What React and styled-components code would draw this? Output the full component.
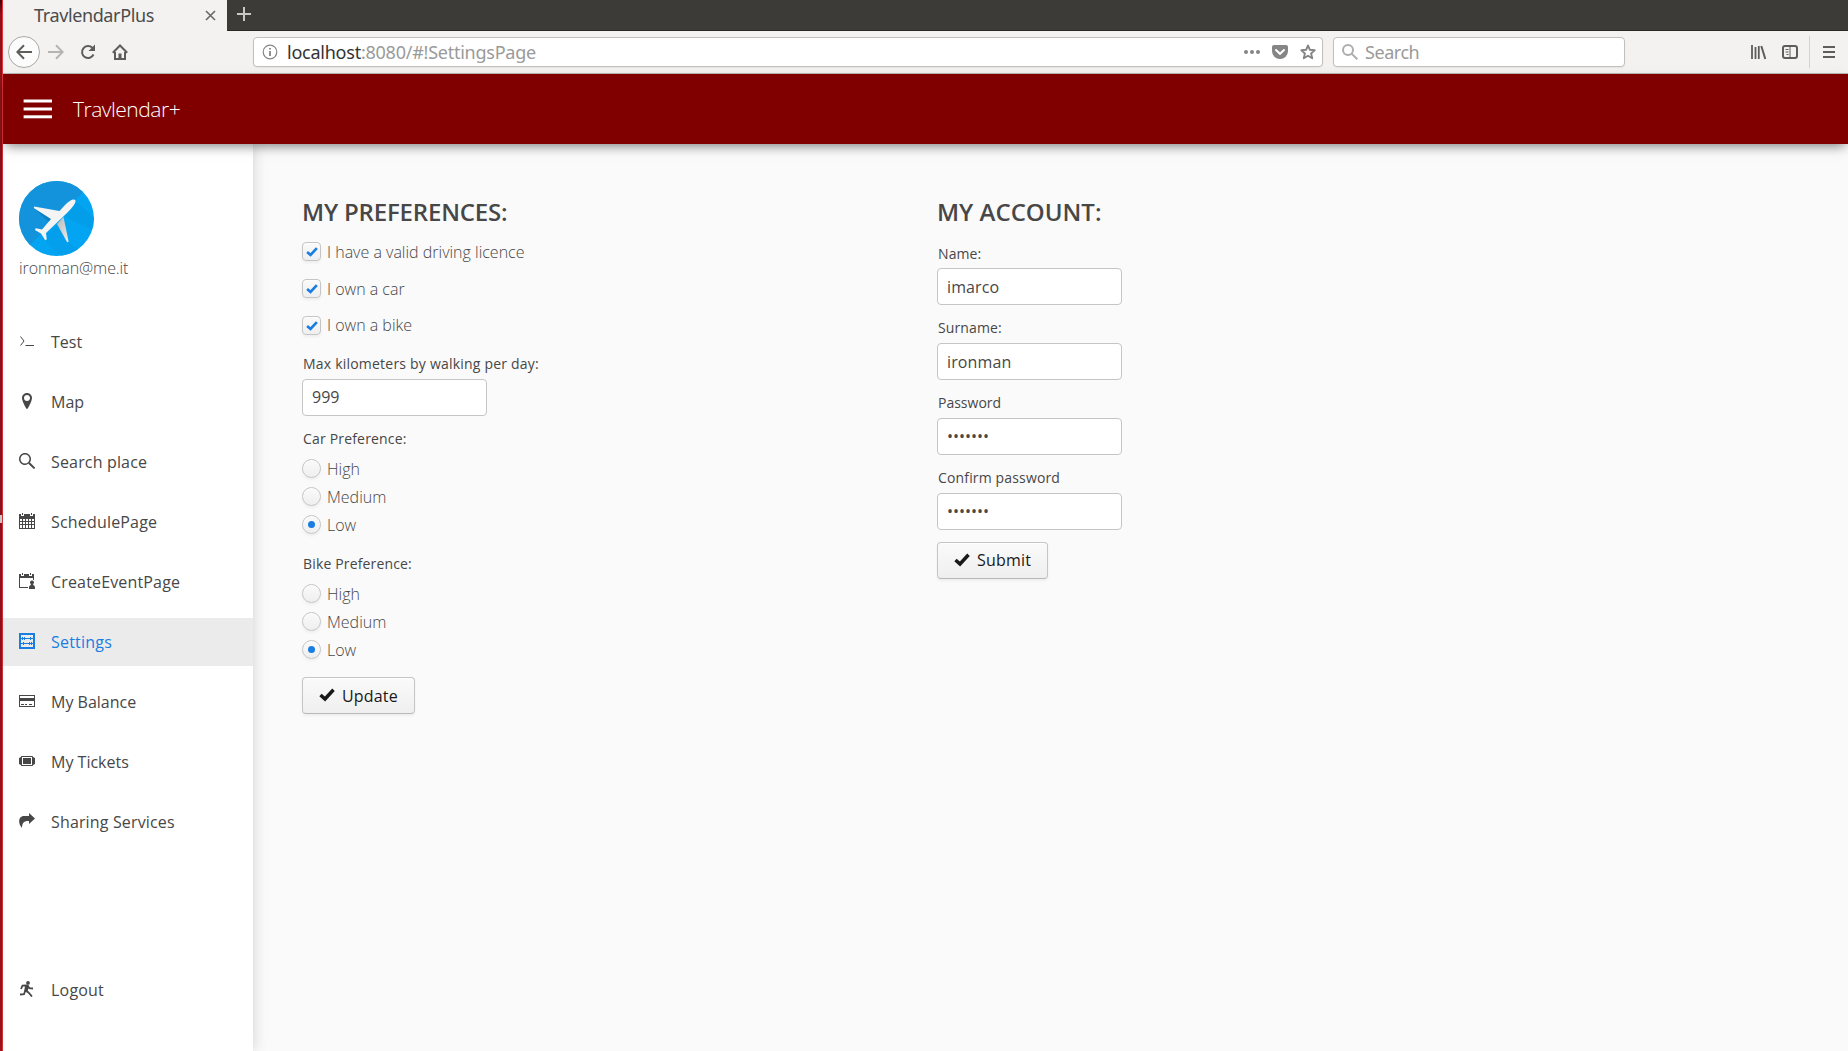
import React from "react";
import styled, { createGlobalStyle, css } from "styled-components";

const GlobalStyle = createGlobalStyle`
  * { box-sizing: border-box; }
  html, body { margin: 0; padding: 0; }
  body {
    font-family: "Open Sans", "Noto Sans", sans-serif;
    font-size: 16px;
    color: #474747;
    background: #fafafa;
    overflow: hidden;
  }
`;

/* ---------- window frame ---------- */

const Desktop = styled.div`
  display: flex;
  width: 1848px;
  height: 1051px;
  overflow: hidden;
`;

const DesktopEdge = styled.div`
  position: relative;
  flex: 0 0 3px;
  background: linear-gradient(to bottom, #3c0608 0, #8d1219 14px, #a3131c 100%);
  border-right: 1px solid #e0323a;
`;

const EdgeMarker = styled.i`
  position: absolute;
  top: 515px;
  left: 0;
  width: 2px;
  height: 8px;
  background: #d5d5d5;
`;

const Browser = styled.div`
  flex: 1;
  min-width: 0;
  display: flex;
  flex-direction: column;
`;

const TabStrip = styled.div`
  display: flex;
  flex: 0 0 31px;
  background: #3c3b37;
  box-shadow: inset 0 -1px 0 #2b2a27;
`;

const Tab = styled.div`
  display: flex;
  align-items: center;
  justify-content: space-between;
  width: 224px;
  padding: 0 11px 0 31px;
  background: #f3f2f1;
  color: #4c4c4c;
`;

const TabTitle = styled.span`
  font-family: "Noto Sans", sans-serif;
  font-size: 18px;
  line-height: 30px;
  height: 31px;
  letter-spacing: -0.38px;
  white-space: nowrap;
`;

const NewTab = styled.div`
  display: flex;
  align-items: center;
  padding: 0 0 3px 10px;
`;

const Toolbar = styled.div`
  display: flex;
  align-items: center;
  flex: 0 0 43px;
  padding: 0 13px 1px 5px;
  background: #f3f2f1;
  border-bottom: 1px solid #b9b8b6;
`;

const BackButton = styled.div`
  display: grid;
  place-items: center;
  width: 32px;
  height: 32px;
  border: 1px solid #a9a8a7;
  border-radius: 50%;
  background: #fcfcfc;
`;

const NavIcons = styled.div`
  display: flex;
  gap: 16px;
  width: 213px;
  padding-left: 8px;
`;

const BarBox = styled.div`
  display: flex;
  align-items: center;
  width: ${(p) => p.$width}px;
  height: 30px;
  padding: 0 6px 0 8px;
  background: #fff;
  border: 1px solid #c2c0be;
  border-radius: 4px;
  box-shadow: 0 1px 2px rgba(0, 0, 0, 0.06);
  margin-right: ${(p) => p.$after || 0}px;
`;

const BarText = styled.span`
  font-family: "Noto Sans", sans-serif;
  font-size: 18px;
  line-height: 28px;
  color: #9a9a9a;
  margin-left: ${(p) => p.$left}px;
  letter-spacing: ${(p) => p.$spacing || 0}px;
  flex: 1;
  white-space: nowrap;
`;

const Host = styled.span`
  color: #333;
`;

const BarActions = styled.div`
  display: flex;
  gap: 12px;
`;

const ToolbarEnd = styled.div`
  display: flex;
  align-items: center;
  margin-left: auto;
`;

const ToolGap = styled.div`
  width: ${(p) => p.$w}px;
`;

const Separator = styled.div`
  width: 1px;
  height: 32px;
  background: #d4d3d1;
  margin: 0 13px 0 11px;
`;

/* ---------- application ---------- */

const AppHeader = styled.header`
  position: relative;
  z-index: 2;
  display: flex;
  align-items: center;
  flex: 0 0 70px;
  padding-left: 20px;
  background: #800000;
  box-shadow: 0 5px 11px -3px rgba(0, 0, 0, 0.5);
`;

const AppTitle = styled.h1`
  margin: 0 0 0 21px;
  color: #fff;
  font-size: 21px;
  font-weight: 300;
  line-height: 70px;
  letter-spacing: -0.48px;
`;

const AppBody = styled.div`
  display: flex;
  flex: 1;
  min-height: 0;
`;

const Sidebar = styled.nav`
  position: relative;
  z-index: 1;
  display: flex;
  flex-direction: column;
  flex: 0 0 250px;
  padding: 37px 0;
  background: #fff;
  box-shadow: 0 0 14px rgba(0, 0, 0, 0.17);
`;

const Profile = styled.div`
  display: flex;
  flex-direction: column;
  height: 137px;
  padding-left: 16px;
`;

const Email = styled.span`
  font-weight: 300;
  line-height: 24px;
  letter-spacing: -0.1px;
`;

const Menu = styled.div`
  display: flex;
  flex-direction: column;
  flex: 1;
  gap: 12px;
`;

const MenuItem = styled.a`
  display: flex;
  gap: 16px;
  height: 48px;
  padding-left: 16px;
  line-height: 48px;
  white-space: nowrap;
  letter-spacing: ${(p) => p.$spacing}px;
  ${(p) => p.$last && css`margin-top: auto;`}
  ${(p) => p.$active && css`
    color: #197de1;
    background: #ebebeb;
  `}
`;

const Glyph = styled.svg`
  width: 16px;
  height: 16px;
  margin-top: 15px;
  fill: currentColor;
`;

const Content = styled.main`
  display: flex;
  flex: 1;
  padding: 50px 0 0 49px;
  background: #fafafa;
`;

const Column = styled.section`
  display: flex;
  flex-direction: column;
  align-items: flex-start;
  flex: 0 0 635px;
`;

const Heading = styled.h2`
  margin: 0;
  font-size: 24px;
  font-weight: 600;
  line-height: 36px;
  text-transform: uppercase;
  letter-spacing: ${(p) => p.$spacing || 0}px;
`;

const CheckList = styled.div`
  padding-top: 3px;
`;

const Choice = styled.label`
  display: flex;
  height: ${(p) => p.$height}px;
  line-height: ${(p) => p.$line || p.$height}px;
  gap: 6px;
  font-weight: 300;
`;

const Control = styled.span`
  display: grid;
  place-items: center;
  width: 19px;
  height: 19px;
  margin-top: ${(p) => p.$top}px;
  border: 1px solid #c5c5c5;
  border-radius: ${(p) => (p.$round ? "50%" : "4px")};
  background: linear-gradient(to bottom, #fafafa 2%, #efefef 98%);
  box-shadow: inset 0 1px 0 #fff, 0 2px 3px rgba(0, 0, 0, 0.05);
`;

const RadioDot = styled.i`
  width: 7px;
  height: 7px;
  border-radius: 50%;
  background: #197de1;
`;

const Caption = styled.div`
  margin: ${(p) => p.$top}px 0 ${(p) => p.$bottom}px 1px;
  font-size: 14px;
  line-height: 23px;
  letter-spacing: ${(p) => p.$spacing || 0}px;
`;

const Field = styled.div`
  width: 185px;
  height: 37px;
  padding-left: 9px;
  line-height: ${(p) => p.$line || 35}px;
  letter-spacing: ${(p) => p.$spacing || 0}px;
  background: #fff;
  border: 1px solid #c5c5c5;
  border-radius: 4px;
  white-space: nowrap;
`;

const Button = styled.button`
  display: flex;
  align-items: flex-start;
  gap: 7px;
  width: ${(p) => p.$width}px;
  height: 37px;
  margin-top: ${(p) => p.$top}px;
  padding: 0 0 0 16px;
  font: inherit;
  line-height: ${(p) => p.$line}px;
  letter-spacing: 0.18px;
  color: #191919;
  border: 1px solid #c5c5c5;
  border-bottom-color: #b8b8b8;
  border-radius: 4px;
  background: linear-gradient(to bottom, #fafafa 2%, #efefef 98%);
  box-shadow: inset 0 1px 0 #fff, 0 2px 3px rgba(0, 0, 0, 0.05);

  svg {
    margin-top: 9px;
  }
`;

/* ---------- drawings ---------- */

const Line = ({ size = 16, color = "#5d5d5c", w = 2, children, ...rest }) => (
  <svg width={size} height={size} viewBox={`0 0 ${size} ${size}`} fill="none" stroke={color} strokeWidth={w} {...rest}>
    {children}
  </svg>
);

const Check = ({ size, color }) => (
  <svg width={size} height={size} viewBox="0 0 16 16">
    <path d="M1.500 8L6 12L14.500 2.800" fill="none" stroke={color} strokeWidth="3.500" />
  </svg>
);

const Avatar = () => (
  <svg width="75" height="75" viewBox="0 0 75 75">
    <defs>
      <clipPath id="disc"><circle cx="37.5" cy="37.5" r="37.5" /></clipPath>
      <linearGradient id="wing" x1="0" y1="0" x2="1" y2="1">
        <stop offset="0" stopColor="#b9b9b9" /><stop offset="1" stopColor="#ececec" />
      </linearGradient>
    </defs>
    <g clipPath="url(#disc)">
      <rect width="75" height="75" fill="#03a5f2" />
      <path d="M0 0H75L64 11L11 64L0 75Z" fill="#1293dc" />
      <path d="M57 20L75 37V50L42 34Z" fill="#0397e0" opacity=".5" />
      <path d="M15 27L33 44L38 30Z" fill="#0877b8" opacity=".7" />
      <path d="M23 57L42 75H70L48 61L38 44Z" fill="#049ae6" opacity=".5" />
    </g>
    <path d="M38 43L44.500 36L49.500 60Q49.500 61.500 48 61Z" fill="url(#wing)" />
    <path d="M15 25.500Q14.500 27 15.500 27.600L32 38L23 48.500L17 47.300Q15.500 48 16.300 49.200L22 52.500L26 59Q27.500 59.500 27.700 58L27 52L48 32Q56.500 23.500 56.600 20Q56.500 18 54 18.500Q51 19 46 24L40.500 30Z" fill="#f4f4f4" />
  </svg>
);

const icons = {
  terminal: (
    <path d="M1.500 3.500L5 8L1.500 12.500M6.500 12.500H15" fill="none" stroke="currentColor" strokeWidth="1" />
  ),
  marker: (
    <path d="M8 0C5.200 0 3 2.200 3 5s4 11 5 11 5-8.200 5-11-2.200-5-5-5zM8 8C6.300 8 5 6.700 5 5s1.300-3 3-3 3 1.300 3 3-1.300 3-3 3z" />
  ),
  search: (
    <path d="M15.700 14.300l-4.200-4.200c-.2-.2-.5-.3-.8-.3.8-1 1.300-2.400 1.300-3.800 0-3.300-2.700-6-6-6S0 2.700 0 6s2.700 6 6 6c1.400 0 2.800-.5 3.800-1.400 0 .3 0 .6.3.8l4.200 4.200c.2.2.5.3.7.3s.5-.1.7-.3c.4-.3.4-.9 0-1.300zM6 10.500C3.500 10.500 1.500 8.500 1.500 6S3.500 1.500 6 1.500s4.500 2 4.500 4.500-2 4.500-4.500 4.500z" />
  ),
  calendar: (
    <path fillRule="evenodd" d="M0 1H2V3H5V1H11V3H14V1H16V16H0ZM1 6V8H3V6ZM4 6V8H6V6ZM7 6V8H9V6ZM10 6V8H12V6ZM13 6V8H15V6ZM1 9V11H3V9ZM4 9V11H6V9ZM7 9V11H9V9ZM10 9V11H12V9ZM13 9V11H15V9ZM1 12V15H3V12ZM4 12V15H6V12ZM7 12V15H9V12ZM10 12V15H12V12ZM13 12V15H15V12ZM3 0H4V2H3ZM12 0H13V2H12Z" />
  ),
  calendarUser: (
    <path fillRule="evenodd" d="M0 1H2V3H5V1H10V3H13V1H15V7H14V5H1V14H9V15H0ZM3 0H4V2H3ZM11 0H12V2H11ZM13 7.500a2 2 0 0 1 1.200 3.600V12C15.500 12.500 16 13.200 16 14.500V16H10V14.500C10 13.200 10.500 12.500 11.800 12V11.100A2 2 0 0 1 13 7.500Z" />
  ),
  abacus: (
    <>
      <path fillRule="evenodd" d="M0 0H16V16H0ZM2 2V14H14V2Z" />
      <path d="M2 5H14V6H2ZM2 10H14V11H2Z" />
      <path d="M3 4H4V7H3ZM5 4H6V7H5ZM11 4H12V7H11ZM4 9H5V12H4ZM10 9H11V12H10ZM12 9H13V12H12Z" />
    </>
  ),
  card: (
    <path fillRule="evenodd" d="M0 2H16V14H0ZM1 3V5H15V3ZM1 8V13H15V8ZM2 11H5V12H2ZM6 11H8V12H6ZM10 11H13V12H10Z" />
  ),
  ticket: (
    <path fillRule="evenodd" d="M2.500 3H13.500Q14 4.500 16 5V11Q14 11.500 13.500 13H2.500Q2 11.500 0 11V5Q2 4.500 2.500 3ZM3 4V12H13V4ZM4 5H12V11H4Z" />
  ),
  forward: (
    <path d="M10 0L16 5.500L10 11V8C5 7.500 3 10 3 15C-1.500 10 -.5 3 5 3H10Z" />
  ),
  runner: (
    <>
      <circle cx="9" cy="1.900" r="1.900" />
      <path d="M2 8L3.500 4.700L8 4.500L10.500 7.200L14 7.500M7.500 5L6.300 9.500L9.500 11.500L13 15.500M6.300 9.500L5 13.200L1 13.500" fill="none" stroke="currentColor" strokeWidth="1.800" />
      <path d="M6 4H9.500L10 6L8.500 10.500L5.500 10Z" />
    </>
  ),
};

const menu = [
  ["Test", "terminal", 0],
  ["Map", "marker", 0],
  ["Search place", "search", 0.16],
  ["SchedulePage", "calendar", 0.18],
  ["CreateEventPage", "calendarUser", 0.16],
  ["Settings", "abacus", 0.22],
  ["My Balance", "card", 0],
  ["My Tickets", "ticket", 0],
  ["Sharing Services", "forward", 0.15],
  ["Logout", "runner", 0.2],
];

function Chrome() {
  return (
    <>
      <TabStrip>
        <Tab>
          <TabTitle>TravlendarPlus</TabTitle>
          <Line size={11} w={1.6} color="#696969"><path d="M1 1L10 10M10 1L1 10" /></Line>
        </Tab>
        <NewTab>
          <Line size={14} w={2} color="#c9c8c5"><path d="M7 0V14M0 7H14" /></Line>
        </NewTab>
      </TabStrip>
      <Toolbar>
        <BackButton>
          <Line><path d="M16 8H1.500M8 1.300L1.300 8L8 14.700" /></Line>
        </BackButton>
        <NavIcons>
          <Line color="#b5b4b3"><path d="M0 8H14.500M8 1.300L14.700 8L8 14.700" /></Line>
          <Line>
            <path d="M13.500 10.500A6 6 0 1 1 12.300 3.800" />
            <path d="M15 0.500V7H8.500Z" fill="#5d5d5c" stroke="none" />
          </Line>
          <Line>
            <path d="M0.800 8.700L8 1.500L15.200 8.700" />
            <path d="M3 8V15H13V8" />
            <path d="M6.500 15V9.500H9.500V15Z" fill="#5d5d5c" stroke="none" />
          </Line>
        </NavIcons>
        <BarBox $width={1070} $after={10}>
          <Line w={1.200} color="#858585">
            <circle cx="8" cy="8" r="6.800" />
            <path d="M8 7V12M8 4V5.600" strokeWidth="1.800" />
          </Line>
          <BarText $left={9} $spacing={-0.24}><Host>localhost</Host>:8080/#!SettingsPage</BarText>
          <BarActions>
            <svg width="16" height="16" fill="#858585"><circle cx="2" cy="8" r="2" /><circle cx="8" cy="8" r="2" /><circle cx="14" cy="8" r="2" /></svg>
            <svg width="16" height="16">
              <path d="M2 1H14Q16 1 16 3V7A8 8 0 0 1 0 7V3Q0 1 2 1Z" fill="#858585" />
              <path d="M4 6L8 9.800L12 6" fill="none" stroke="#fff" strokeWidth="2" strokeLinecap="round" />
            </svg>
            <Line color="#858585" w={1.900} strokeLinejoin="round"><path d="M8 1.500L9.900 5.800L14.700 6.300L11.100 9.500L12.200 14.300L8 11.800L3.800 14.300L4.900 9.500L1.300 6.300L6.100 5.800Z" /></Line>
          </BarActions>
        </BarBox>
        <BarBox $width={292}>
          <Line w={2} color="#adadad"><circle cx="6" cy="6" r="5" /><path d="M9.600 9.600L15.300 15.300" /></Line>
          <BarText $left={7} $spacing={-0.45}>Search</BarText>
        </BarBox>
        <ToolbarEnd>
          <Line>
            <path d="M1 1V15M4.500 3V15M7.800 2V15" strokeWidth="1.800" /><path d="M10.300 2L14.300 15" />
          </Line>
          <ToolGap $w={15} />
          <Line>
            <rect x="1" y="2" width="14" height="12" rx="2" />
            <path d="M8 2V14" strokeWidth="1" /><path d="M3.500 5.500H6.500M3.500 8H6.500M4.500 10.500H6.500" strokeWidth="1" />
          </Line>
          <Separator />
          <Line size={12}><path d="M0 1H12M0 6H12M0 11H12" /></Line>
        </ToolbarEnd>
      </Toolbar>
    </>
  );
}

function CheckRow({ line = 38, children }) {
  return (
    <Choice $height={37} $line={line}>
      <Control $top={9}><Check size={12} color="#197de1" /></Control>
      {children}
    </Choice>
  );
}

function RadioGroup({ selected }) {
  return (
    <div>
      {["High", "Medium", "Low"].map((name) => (
        <Choice key={name} $height={28}>
          <Control $round $top={4}>{name === selected && <RadioDot />}</Control>
          {name}
        </Choice>
      ))}
    </div>
  );
}

export default function App() {
  return (
    <Desktop>
      <GlobalStyle />
      <DesktopEdge><EdgeMarker /></DesktopEdge>
      <Browser>
        <Chrome />
        <AppHeader>
          <svg width="29" height="20" viewBox="0 0 29 20" fill="#fff">
            <rect x="0.600" width="28.400" height="3" y="0.500" /><rect x="0.600" width="28.400" height="3" y="8.500" /><rect x="0.600" width="28.400" height="3" y="16.300" />
          </svg>
          <AppTitle>Travlendar+</AppTitle>
        </AppHeader>
        <AppBody>
          <Sidebar>
            <Profile>
              <Avatar />
              <Email>ironman@me.it</Email>
            </Profile>
            <Menu>
              {menu.map(([name, icon, spacing]) => (
                <MenuItem key={name} $spacing={spacing} $active={name === "Settings"} $last={name === "Logout"}>
                  <Glyph viewBox="0 0 16 16">{icons[icon]}</Glyph>
                  {name}
                </MenuItem>
              ))}
            </Menu>
          </Sidebar>
          <Content>
            <Column>
              <Heading $spacing={-0.18}>My preferences:</Heading>
              <CheckList>
                <CheckRow>I have a valid driving licence</CheckRow>
                <CheckRow>I own a car</CheckRow>
                <CheckRow line={36}>I own a bike</CheckRow>
              </CheckList>
              <Caption $top={8} $bottom={4} $spacing={0.21}>Max kilometers by walking per day:</Caption>
              <Field>999</Field>
              <Caption $top={11} $bottom={5} $spacing={0.18}>Car Preference:</Caption>
              <RadioGroup selected="Low" />
              <Caption $top={13} $bottom={5} $spacing={0.15}>Bike Preference:</Caption>
              <RadioGroup selected="Low" />
              <Button $width={113} $top={13} $line={36}><Check size={16} color="#191919" />Update</Button>
            </Column>
            <Column>
              <Heading>My account:</Heading>
              <Caption $top={12} $bottom={3} $spacing={0.1}>Name:</Caption>
              <Field $line={37} $spacing={0.12}>imarco</Field>
              <Caption $top={11} $bottom={4} $spacing={0.12}>Surname:</Caption>
              <Field $line={37} $spacing={0.12}>ironman</Field>
              <Caption $top={11} $bottom={4}>Password</Caption>
              <Field>•••••••</Field>
              <Caption $top={11} $bottom={4} $spacing={0.15}>Confirm password</Caption>
              <Field>•••••••</Field>
              <Button $width={111} $top={12} $line={34}><Check size={16} color="#191919" />Submit</Button>
            </Column>
          </Content>
        </AppBody>
      </Browser>
    </Desktop>
  );
}
